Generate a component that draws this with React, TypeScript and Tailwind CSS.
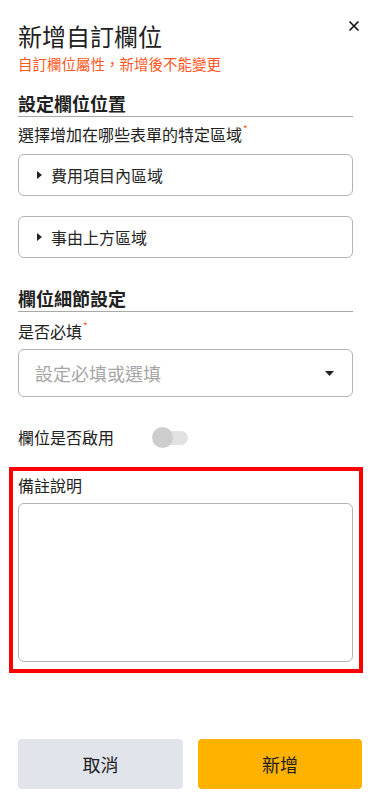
const font = {
  fontFamily: '"Noto Sans CJK TC", "Noto Sans", sans-serif',
};

function Star() {
  return <span className="ml-[1px] align-top text-[10px] leading-[14px] text-[#ff5722]">*</span>;
}

function SectionTitle({ children }: { children: React.ReactNode }) {
  return (
    <div className="border-b border-[#a8a8a8] text-[18px] font-bold leading-[25px] text-[#212121]">
      {children}
    </div>
  );
}

function AreaBox({ label }: { label: string }) {
  return (
    <div className="flex h-[42px] items-center gap-[9px] rounded-[6px] border border-[#b3b3b3] pl-[18px]">
      <svg width="5" height="8" viewBox="0 0 5 8">
        <polygon points="0,0 5,4 0,8" fill="#222" />
      </svg>
      <span className="text-[16px] leading-[24px] text-[#262626]">{label}</span>
    </div>
  );
}

export default function App() {
  return (
    <div className="flex h-[809px] w-[370px] flex-col bg-white px-[18px] pr-[17px]" style={font}>
      {/* header */}
      <div className="flex items-start justify-between pt-[18px]">
        <div>
          <div className="text-[24px] leading-[35px] text-[#212121]">新增自訂欄位</div>
          <div className="text-[14.5px] leading-[21px] text-[#ff5722]">自訂欄位屬性，新增後不能變更</div>
        </div>
        <button className="-mr-[7px] mt-[2px]" aria-label="close">
          <svg width="12" height="12" viewBox="0 0 12 12">
            <path d="M1.5 1.5L10.5 10.5M10.5 1.5L1.5 10.5" stroke="#111" strokeWidth="1.6" />
          </svg>
        </button>
      </div>

      <div className="mt-[17px]">
        <SectionTitle>設定欄位位置</SectionTitle>
      </div>
      <div className="mt-[5px] text-[16px] leading-[24px] text-[#212121]">
        選擇增加在哪些表單的特定區域
        <Star />
      </div>
      <div className="mt-[8px] flex flex-col gap-[20px]">
        <AreaBox label="費用項目內區域" />
        <AreaBox label="事由上方區域" />
      </div>

      <div className="mt-[28px]">
        <SectionTitle>欄位細節設定</SectionTitle>
      </div>
      <div className="mt-[7px] text-[16px] leading-[24px] text-[#212121]">
        是否必填
        <Star />
      </div>
      <div className="mt-[6px] flex h-[48px] items-center justify-between rounded-[6px] border border-[#b3b3b3] pl-[16px] pr-[18px]">
        <span className="text-[18px] leading-[26px] text-[#a6a6a6]">設定必填或選填</span>
        <svg width="9" height="5" viewBox="0 0 9 5">
          <polygon points="0,0 9,0 4.5,5" fill="#222" />
        </svg>
      </div>

      <div className="mt-[28px] flex h-[24px] items-center">
        <span className="w-[134px] text-[16px] leading-[24px] text-[#212121]">欄位是否啟用</span>
        <div className="relative h-[21px] w-[36px]">
          <div className="absolute left-[8px] top-[4px] h-[14px] w-[28px] rounded-full bg-[#e2e2e2]" />
          <div className="absolute left-0 top-0 h-[21px] w-[21px] rounded-full bg-[#cdcdcd]" />
        </div>
      </div>

      <div className="-ml-[9px] -mr-[10px] mt-[18px] border-[4px] border-[#ff0000] pb-[7px] pl-[5px] pr-[6px] pt-[2px]">
        <div className="text-[16px] leading-[24px] text-[#212121]">備註說明</div>
        <textarea className="mt-[6px] block h-[159px] w-full resize-none rounded-[6px] border border-[#b3b3b3] outline-none" />
      </div>

      <div className="-mr-[9px] mb-[20px] mt-auto flex gap-[15px]">
        <button className="h-[50px] w-[165px] rounded-[4px] bg-[#e1e4eb] text-[18px] text-[#212121]">取消</button>
        <button className="h-[50px] flex-1 rounded-[4px] bg-[#ffb300] text-[18px] text-[#212121]">新增</button>
      </div>
    </div>
  );
}
